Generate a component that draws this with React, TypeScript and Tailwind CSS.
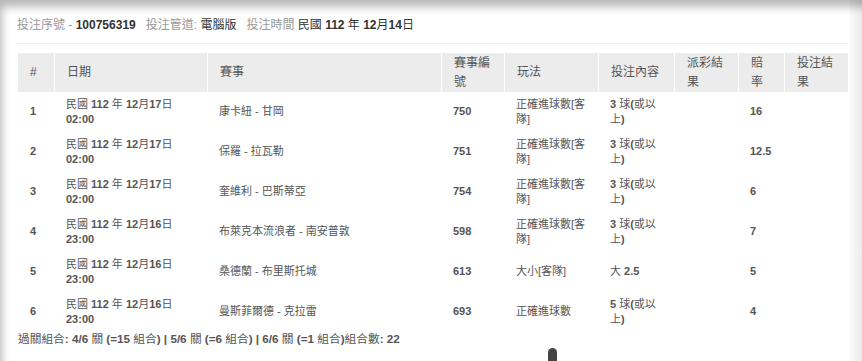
import React from 'react';

type Bet = {
  no: number;
  date: string;
  time: string;
  match: string;
  code: string;
  play: string[];
  pick: string[];
  payout: string;
  odds: string;
  result: string;
};

const bets: Bet[] = [
  { no: 1, date: '民國 112 年 12月17日', time: '02:00', match: '康卡紐 - 甘岡', code: '750', play: ['正確進球數[客', '隊]'], pick: ['3 球(或以', '上)'], payout: '', odds: '16', result: '' },
  { no: 2, date: '民國 112 年 12月17日', time: '02:00', match: '保羅 - 拉瓦勒', code: '751', play: ['正確進球數[客', '隊]'], pick: ['3 球(或以', '上)'], payout: '', odds: '12.5', result: '' },
  { no: 3, date: '民國 112 年 12月17日', time: '02:00', match: '奎維利 - 巴斯蒂亞', code: '754', play: ['正確進球數[客', '隊]'], pick: ['3 球(或以', '上)'], payout: '', odds: '6', result: '' },
  { no: 4, date: '民國 112 年 12月16日', time: '23:00', match: '布萊克本流浪者 - 南安普敦', code: '598', play: ['正確進球數[客', '隊]'], pick: ['3 球(或以', '上)'], payout: '', odds: '7', result: '' },
  { no: 5, date: '民國 112 年 12月16日', time: '23:00', match: '桑德蘭 - 布里斯托城', code: '613', play: ['大小[客隊]'], pick: ['大 2.5'], payout: '', odds: '5', result: '' },
  { no: 6, date: '民國 112 年 12月16日', time: '23:00', match: '曼斯菲爾德 - 克拉雷', code: '693', play: ['正確進球數'], pick: ['5 球(或以', '上)'], payout: '', odds: '4', result: '' },
];

const headers: string[][] = [
  ['#'],
  ['日期'],
  ['賽事'],
  ['賽事編', '號'],
  ['玩法'],
  ['投注內容'],
  ['派彩結', '果'],
  ['賠', '率'],
  ['投注結', '果'],
];

function Mixed({ text }: { text: string }) {
  const parts = text.split(/([\u4e00-\u9fff]+)/).filter(Boolean);
  return (
    <>
      {parts.map((p, i) =>
        /[\u4e00-\u9fff]/.test(p) ? (
          <span key={i} className="font-normal">{p}</span>
        ) : (
          <span key={i} className="font-bold">{p}</span>
        )
      )}
    </>
  );
}

function Lines({ lines, mixed }: { lines: string[]; mixed?: boolean }) {
  return (
    <>
      {lines.map((l, i) => (
        <React.Fragment key={i}>
          {i > 0 && <br />}
          {mixed ? <Mixed text={l} /> : l}
        </React.Fragment>
      ))}
    </>
  );
}

export default function App() {
  return (
    <div className="relative h-[361px] w-[862px] overflow-hidden bg-white font-['Liberation_Sans','Noto_Sans_CJK_TC',sans-serif] text-[12px] text-[#555]">
      <div className="flex h-full">
        <div className="flex-1 pl-[17px] pr-[2px] pt-[16px]">
          {/* bet summary */}
          <div className="flex h-[18px] items-center leading-[18px] whitespace-nowrap">
            <span className="text-[#999]">投注序號&nbsp;-&nbsp;</span>
            <span className="mr-[10px] font-bold text-[#333]">100756319</span>
            <span className="text-[#999]">投注管道:&nbsp;</span>
            <span className="mr-[10px] text-[#333]">電腦版</span>
            <span className="text-[#999]">投注時間&nbsp;</span>
            <span className="text-[#333]">
              <Mixed text="民國 112 年 12月14日" />
            </span>
          </div>

          <hr className="mt-[9px] border-t border-[#eeeeee]" />

          <table className="ml-[1px] mt-[9px] w-[830px] table-fixed border-separate border-spacing-0">
            <colgroup>
              <col className="w-[36px]" />
              <col className="w-[153px]" />
              <col className="w-[234px]" />
              <col className="w-[63px]" />
              <col className="w-[94px]" />
              <col className="w-[76px]" />
              <col className="w-[64px]" />
              <col className="w-[46px]" />
              <col className="w-[64px]" />
            </colgroup>
            <thead>
              <tr>
                {headers.map((h, i) => (
                  <th
                    key={i}
                    className={`h-[39px] bg-[#ececec] pl-[12px] text-left align-middle font-normal leading-[19px] whitespace-nowrap text-[#555] ${i > 0 ? 'border-l border-white' : ''}`}
                  >
                    <Lines lines={h} />
                  </th>
                ))}
              </tr>
            </thead>
            <tbody>
              {bets.map((b) => (
                <tr key={b.no} className="h-[40px] text-[11px] leading-[15.5px] whitespace-nowrap">
                  <td className="pl-[12px] align-middle font-bold">{b.no}</td>
                  <td className="pl-[12px] align-middle">
                    <Mixed text={b.date} />
                    <br />
                    <span className="font-bold">{b.time}</span>
                  </td>
                  <td className="pl-[12px] align-middle">{b.match}</td>
                  <td className="pl-[12px] align-middle font-bold">{b.code}</td>
                  <td className="pl-[12px] align-middle">
                    <Lines lines={b.play} />
                  </td>
                  <td className="pl-[12px] align-middle">
                    <Lines lines={b.pick} mixed />
                  </td>
                  <td className="pl-[12px] align-middle">{b.payout}</td>
                  <td className="pl-[12px] align-middle font-bold">{b.odds}</td>
                  <td className="pl-[12px] align-middle">{b.result}</td>
                </tr>
              ))}
            </tbody>
          </table>

          <div className="ml-[1px] text-[11.7px] leading-[14px] whitespace-nowrap">
            <Mixed text="過關組合: 4/6 關 (=15 組合) | 5/6 關 (=6 組合) | 6/6 關 (=1 組合)組合數: 22" />
          </div>
        </div>
        <div className="w-[12px] bg-gradient-to-r from-[#fafafa] to-[#ececec]" />
      </div>

      {/* modal edge shadow */}
      <div className="pointer-events-none absolute inset-0 shadow-[inset_5px_10px_9px_-3px_rgba(0,0,0,0.28)]" />

      {/* pointer nub */}
      <div className="absolute left-[548px] top-[348px] h-[14px] w-[9px] rounded-t-full bg-[#444]" />
    </div>
  );
}
